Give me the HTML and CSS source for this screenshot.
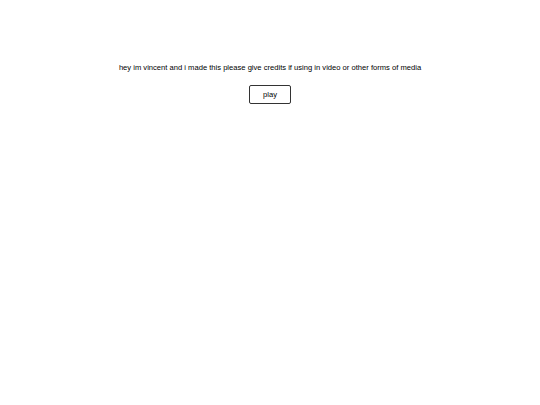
FILE: index.html
```html
<!DOCTYPE html>
<html lang="en">
<head>
  <meta charset="UTF-8" />
  <title>vincent</title>
  <link rel="stylesheet" href="styles.css">
</head>
<body>
  <div class="intro">
    <p class="credits">hey im vincent and i made this please give credits if using in video or other forms of media</p>
    <button class="play-btn">play</button>
  </div>
</body>
</html>
```

FILE: styles.css
```css
body {
  font-family: "Liberation Sans", Arial, sans-serif;
  background: white;
  margin: 0;
  color: #000;
}

.intro {
  display: flex;
  flex-direction: column;
  align-items: center;
  padding-top: 63px;
}

.credits {
  margin: 0;
  font-size: 7.6px;
  line-height: 10px;
}

.play-btn {
  margin-top: 12px;
  width: 42px;
  height: 19px;
  font-family: inherit;
  font-size: 7.6px;
  color: #000;
  background: white;
  border: 1px solid #333;
  border-radius: 2px;
  padding: 0;
}
```
